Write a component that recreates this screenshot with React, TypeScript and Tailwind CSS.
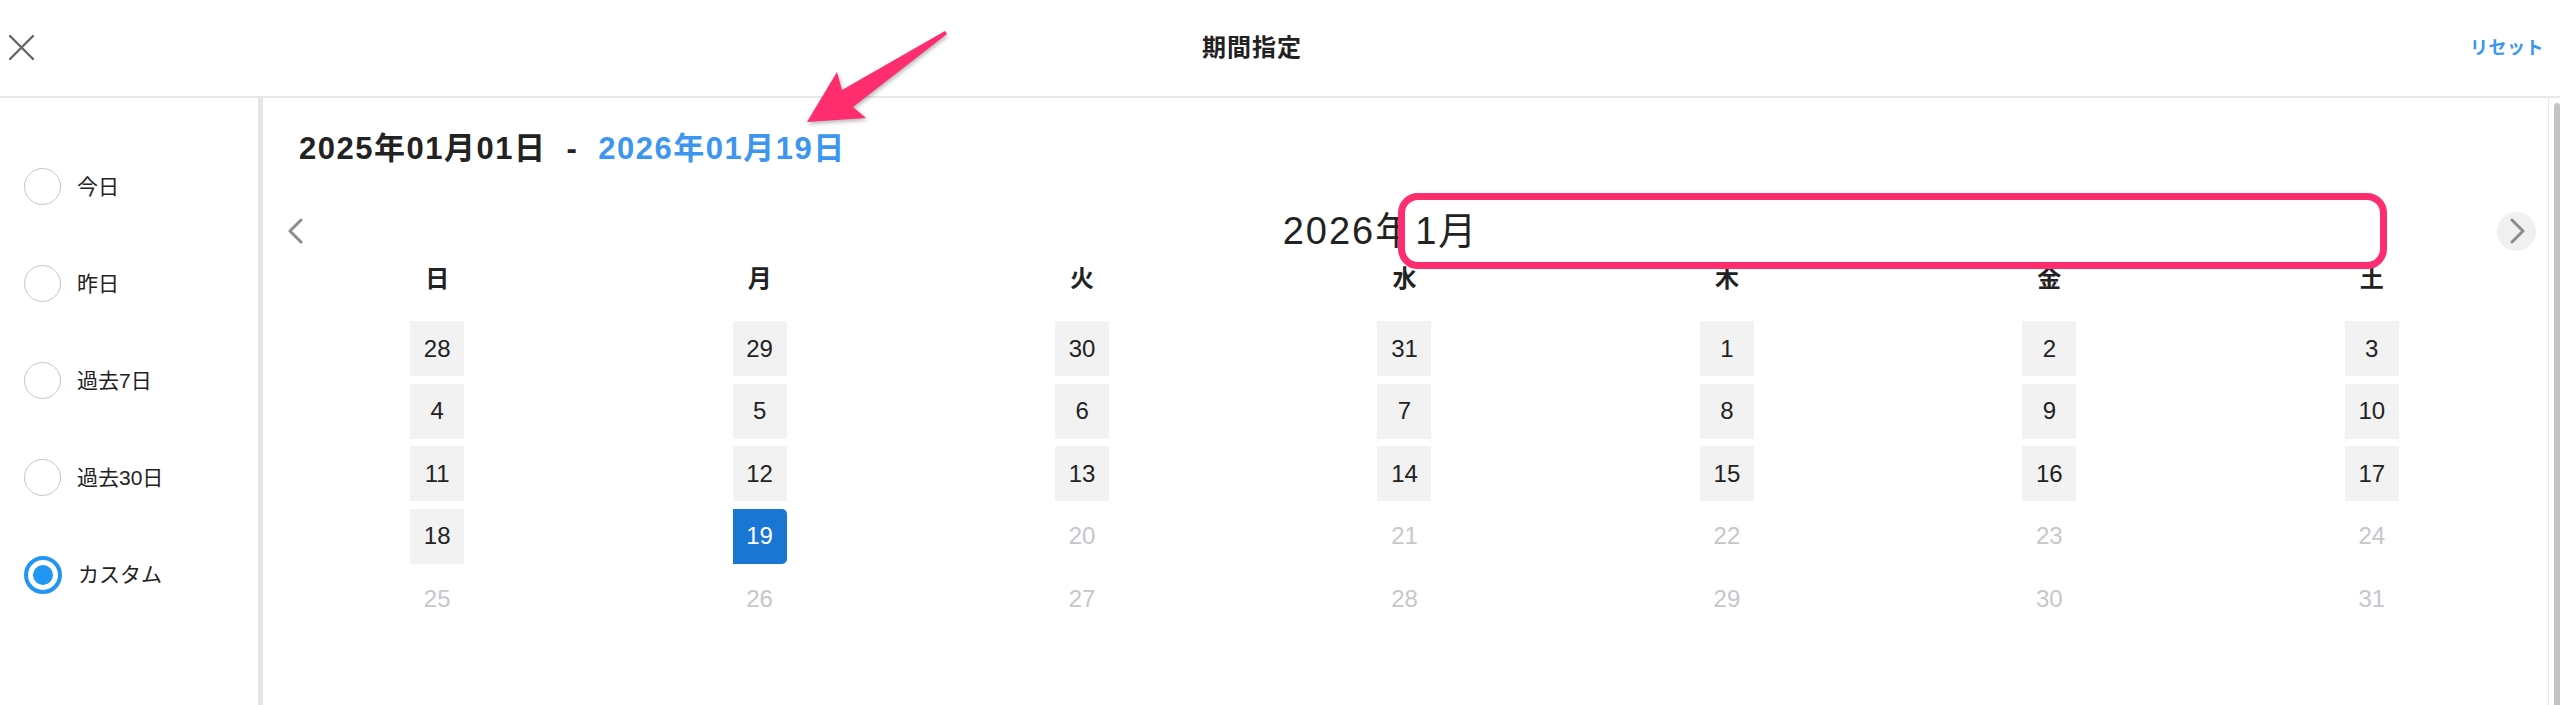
import React from "react";

const FONT = { fontFamily: '"Liberation Sans", "Noto Sans CJK JP", sans-serif' };

type Day = { n: number; kind: "range" | "end" | "off" };

const weeks: Day[][] = [
  [28, 29, 30, 31, 1, 2, 3].map((n) => ({ n, kind: "range" as const })),
  [4, 5, 6, 7, 8, 9, 10].map((n) => ({ n, kind: "range" as const })),
  [11, 12, 13, 14, 15, 16, 17].map((n) => ({ n, kind: "range" as const })),
  [
    { n: 18, kind: "range" },
    { n: 19, kind: "end" },
    ...[20, 21, 22, 23, 24].map((n) => ({ n, kind: "off" as const })),
  ],
  [25, 26, 27, 28, 29, 30, 31].map((n) => ({ n, kind: "off" as const })),
];

const weekdays = ["日", "月", "火", "水", "木", "金", "土"];
const presets = ["今日", "昨日", "過去7日", "過去30日", "カスタム"];

function Radio({ checked }: { checked: boolean }) {
  return checked ? (
    <span className="flex h-[38px] w-[38px] items-center justify-center rounded-full border-4 border-[#2196f3]">
      <span className="h-[20px] w-[20px] rounded-full bg-[#2196f3]" />
    </span>
  ) : (
    <span className="h-[37px] w-[37px] rounded-full border-[1.5px] border-[#c4c4c4]" />
  );
}

function DayCell({ day }: { day: Day }) {
  const tone =
    day.kind === "end"
      ? "bg-[#1976d2] text-white rounded-r-[5px]"
      : day.kind === "range"
        ? "bg-[#f2f2f2] text-[#222]"
        : "text-[#c6c6cc]";
  return (
    <div className="flex justify-center">
      <div className={`flex h-[55px] w-[54px] items-center justify-center text-[24px] ${tone}`}>{day.n}</div>
    </div>
  );
}

export default function App() {
  return (
    <div className="relative h-[705px] w-[2560px] overflow-hidden bg-white text-[#222]" style={FONT}>
      {/* header */}
      <header className="flex h-[98px] items-center border-b-2 border-[#e8e8e8]">
        <div className="w-[200px] pl-[9px]">
          <svg width="25" height="25" viewBox="0 0 25 25" className="mt-[-2px]">
            <path d="M1 1 L24 24 M24 1 L1 24" stroke="#666" strokeWidth="2.4" strokeLinecap="round" />
          </svg>
        </div>
        <div className="flex-1 text-center text-[24px] font-bold tracking-[1px]">期間指定</div>
        <div className="flex w-[256px] justify-end pr-[16px] text-[18px] font-bold tracking-[0.5px] text-[#3c96ef]">
          リセット
        </div>
      </header>

      <div className="flex h-[607px]">
        {/* presets */}
        <aside className="w-[258px] pt-[40px]">
          {presets.map((p, i) => (
            <div key={p} className="flex h-[97px] items-center gap-[16px] pl-[24px] text-[21px] text-[#222]">
              <Radio checked={i === presets.length - 1} />
              <span>{p}</span>
            </div>
          ))}
        </aside>
        <div className="w-[5px] bg-[#e6e6e6]" />

        {/* calendar */}
        <main className="flex-1 pt-[33px]">
          <div className="flex h-[36px] items-center pl-[36px] text-[31px] font-bold leading-[36px] tracking-[1.5px]">
            <span>2025年01月01日</span>
            <span className="mx-[20px]">-</span>
            <span className="text-[#3c96ef]">2026年01月19日</span>
          </div>

          <div className="mt-[44px] flex h-[40px] items-center pl-[13px] pr-[12px]">
            <button className="flex h-[40px] w-[40px] items-center justify-center rounded-full">
              <svg width="18" height="26" viewBox="0 0 18 26">
                <path d="M14 2 L3 13 L14 24" fill="none" stroke="#8c8c8c" strokeWidth="3" strokeLinecap="round" strokeLinejoin="round" />
              </svg>
            </button>
            <div className="flex flex-1 justify-center pr-[52px] text-[38px] leading-[40px] tracking-[2px]">
              <span>2026年</span>
              <span className="relative inline-block">
                {/* annotation: highlight box */}
                <span className="absolute left-[-17px] top-[-18px] h-[76px] w-[989px] rounded-[20px] border-[7px] border-[#fe2d6e] bg-white" />
                <span className="relative">1月</span>
              </span>
            </div>
            <button className="flex h-[39px] w-[39px] items-center justify-center rounded-full bg-[#f0f0f0]">
              <svg width="18" height="26" viewBox="0 0 18 26">
                <path d="M4 2 L15 13 L4 24" fill="none" stroke="#8c8c8c" strokeWidth="3" strokeLinecap="round" strokeLinejoin="round" />
              </svg>
            </button>
          </div>

          <div className="mt-[13px] grid grid-cols-7 pl-[13px] pr-[15px]">
            {weekdays.map((w) => (
              <div key={w} className="h-[30px] text-center text-[24px] font-bold leading-[30px]">
                {w}
              </div>
            ))}
          </div>

          <div className="mt-[27px] grid grid-cols-7 gap-y-[7.5px] pl-[13px] pr-[15px]">
            {weeks.flat().map((d, i) => (
              <DayCell key={i} day={d} />
            ))}
          </div>
        </main>

        {/* scrollbar */}
        <div className="w-[12px] border-l border-[#e6e6e6] pl-[5px] pt-[5px]">
          <div className="h-full w-full rounded-t-full bg-[#c4c4c4]" />
        </div>
      </div>

      {/* annotation: arrow */}
      <svg
        className="absolute left-[795px] top-[25px] drop-shadow-[1px_2px_2px_rgba(0,0,0,0.3)]"
        width="160"
        height="110"
        viewBox="0 0 160 110"
      >
        <polygon points="12,97 42,47 47,65 150,6 152,9 58,82 71,93" fill="#fe2d6e" />
      </svg>
    </div>
  );
}
